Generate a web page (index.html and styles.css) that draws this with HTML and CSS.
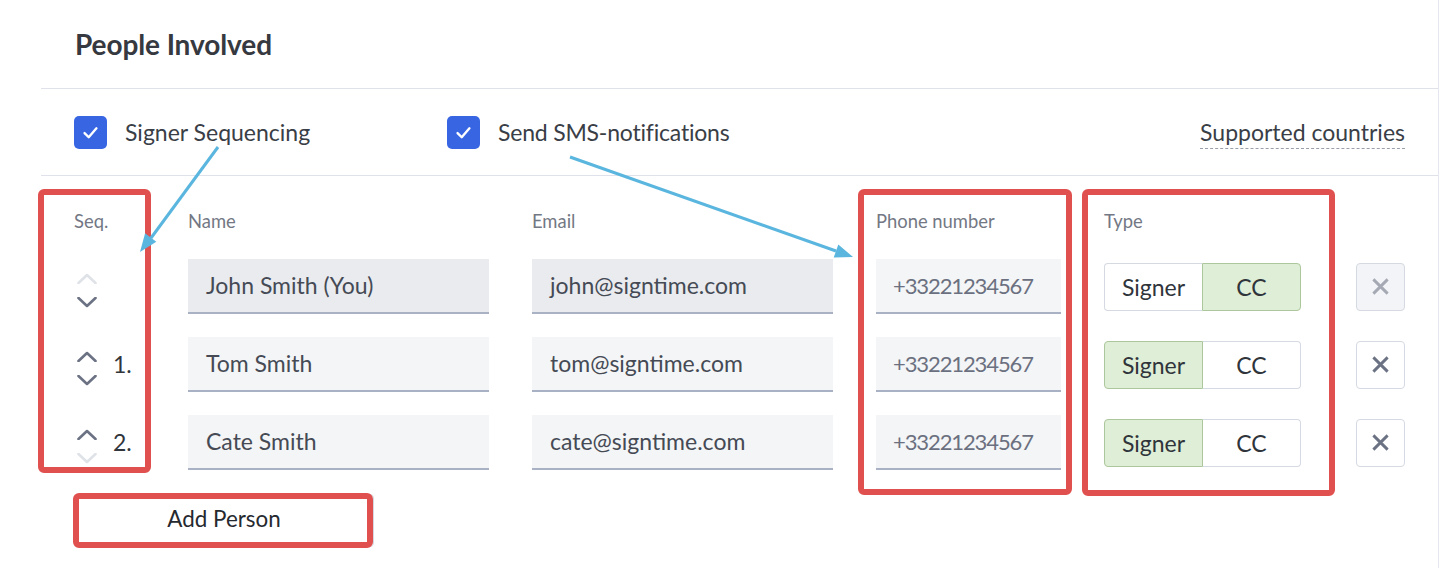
FILE: index.html
```html
<!DOCTYPE html>
<html>
<head>
<meta charset="utf-8">
<link rel="stylesheet" href="styles.css">
</head>
<body>
<div class="page">
  <div class="panel">
    <div class="title-bar"><h1 class="title">People Involved</h1></div>
    <div class="options">
      <label class="opt opt-seq">
        <span class="checkbox"><svg viewBox="0 0 16 16" width="19" height="19"><path d="M3 8.5 L6.5 12 L13 4.5" fill="none" stroke="#fff" stroke-width="2" stroke-linecap="round" stroke-linejoin="round"/></svg></span>
        <span class="opt-label">Signer Sequencing</span>
      </label>
      <label class="opt">
        <span class="checkbox"><svg viewBox="0 0 16 16" width="19" height="19"><path d="M3 8.5 L6.5 12 L13 4.5" fill="none" stroke="#fff" stroke-width="2" stroke-linecap="round" stroke-linejoin="round"/></svg></span>
        <span class="opt-label">Send SMS-notifications</span>
      </label>
      <a class="supported">Supported countries</a>
    </div>
    <div class="table">
      <div class="th">Seq.</div>
      <div class="th">Name</div>
      <div class="th">Email</div>
      <div class="th">Phone number</div>
      <div class="th">Type</div>
      <div class="th"></div>

      <div class="seq">
        <div class="chevrons">
          <svg class="chev off" viewBox="0 0 20 11" width="20" height="11"><path d="M1.5 10 L10 2 L18.5 10"/></svg>
          <svg class="chev" viewBox="0 0 20 11" width="20" height="11"><path d="M1.5 1 L10 9 L18.5 1"/></svg>
        </div>
        <span class="num"></span>
      </div>
      <div class="field disabled">John Smith (You)</div>
      <div class="field disabled">john@signtime.com</div>
      <div class="field phone">+33221234567</div>
      <div class="toggle"><span class="tg">Signer</span><span class="tg on">CC</span></div>
      <div class="del disabled"><svg viewBox="0 0 16 16" width="19" height="19"><path d="M2 2 L14 14 M14 2 L2 14"/></svg></div>

      <div class="seq">
        <div class="chevrons">
          <svg class="chev" viewBox="0 0 20 11" width="20" height="11"><path d="M1.5 10 L10 2 L18.5 10"/></svg>
          <svg class="chev" viewBox="0 0 20 11" width="20" height="11"><path d="M1.5 1 L10 9 L18.5 1"/></svg>
        </div>
        <span class="num">1.</span>
      </div>
      <div class="field">Tom Smith</div>
      <div class="field">tom@signtime.com</div>
      <div class="field phone">+33221234567</div>
      <div class="toggle"><span class="tg on">Signer</span><span class="tg">CC</span></div>
      <div class="del"><svg viewBox="0 0 16 16" width="19" height="19"><path d="M2 2 L14 14 M14 2 L2 14"/></svg></div>

      <div class="seq">
        <div class="chevrons">
          <svg class="chev" viewBox="0 0 20 11" width="20" height="11"><path d="M1.5 10 L10 2 L18.5 10"/></svg>
          <svg class="chev off" viewBox="0 0 20 11" width="20" height="11"><path d="M1.5 1 L10 9 L18.5 1"/></svg>
        </div>
        <span class="num">2.</span>
      </div>
      <div class="field">Cate Smith</div>
      <div class="field">cate@signtime.com</div>
      <div class="field phone">+33221234567</div>
      <div class="toggle"><span class="tg on">Signer</span><span class="tg">CC</span></div>
      <div class="del"><svg viewBox="0 0 16 16" width="19" height="19"><path d="M2 2 L14 14 M14 2 L2 14"/></svg></div>
    </div>
    <button class="add">Add Person</button>
  </div>

  <svg class="annot" width="1441" height="568" viewBox="0 0 1441 568">
    <g fill="none" stroke="#e0504f" stroke-width="6">
      <rect x="41" y="192" width="107" height="278" rx="3"/>
      <rect x="861" y="192" width="208" height="300" rx="3"/>
      <rect x="1085" y="192" width="247" height="301" rx="3"/>
      <rect x="76" y="496" width="294" height="49" rx="3"/>
    </g>
    <g stroke="#5ab6de" stroke-width="3" fill="#5ab6de">
      <line x1="218" y1="147" x2="151" y2="238"/>
      <polygon points="140,252 156.3,241.7 145.1,233.3" stroke="none"/>
      <line x1="570" y1="157" x2="836" y2="251"/>
      <polygon points="853,257 833.7,257.6 838.3,244.4" stroke="none"/>
    </g>
  </svg>
</div>
</body>
</html>
```

FILE: styles.css
```css
* { box-sizing: border-box; }
body {
  margin: 0;
  background: #fff;
  font-family: "Lato", "Liberation Sans", sans-serif;
  color: #363b44;
}
.page {
  position: relative;
  width: 1441px;
  height: 568px;
  overflow: hidden;
}
.panel {
  margin-left: 41px;
  width: 1398px;
  height: 568px;
  border-right: 1px solid #e4e7ee;
}
.title-bar {
  height: 89px;
  border-bottom: 1px solid #dfe2ea;
  padding: 27px 0 0 34px;
}
.title {
  margin: 0;
  font-size: 28px;
  line-height: 34px;
  font-weight: 700;
  color: #36393f;
  letter-spacing: -0.1px;
}
.options {
  height: 87px;
  border-bottom: 1px solid #dfe2ea;
  display: flex;
  align-items: center;
  padding: 0 33px 0 33px;
}
.opt {
  display: flex;
  align-items: center;
  gap: 18px;
}
.opt-seq { width: 373px; }
.checkbox {
  width: 33px;
  height: 33px;
  border-radius: 5px;
  background: #3866e3;
  display: flex;
  align-items: center;
  justify-content: center;
}
.opt-label {
  font-size: 23px;
  color: #3a3e46;
}
.opt:not(.opt-seq) .opt-label { letter-spacing: -0.2px; }
.supported {
  margin-left: auto;
  font-size: 23px;
  color: #3a3e46;
  text-decoration: underline dashed #9aa0aa;
  text-underline-offset: 7px;
  text-decoration-thickness: 1px;
}
.table {
  display: grid;
  grid-template-columns: 71px 301px 301px 185px 209px 49px;
  grid-auto-rows: 55px;
  grid-template-rows: 60px;
  column-gap: 43px;
  row-gap: 23px;
  padding: 0 33px;
}
.th {
  padding-top: 34px;
  font-size: 18.4px;
  line-height: 22px;
  color: #737884;
}
.seq {
  display: flex;
  padding-left: 3px;
  gap: 16px;
}
.chevrons {
  display: flex;
  flex-direction: column;
  padding-top: 14px;
  gap: 13px;
}
.chev path {
  fill: none;
  stroke: #6b7284;
  stroke-width: 2.6;
  stroke-linecap: round;
  stroke-linejoin: round;
}
.chev.off path { stroke: #dfe2e7; }
.num {
  font-size: 23px;
  line-height: 55px;
  color: #30343b;
}
.field {
  background: #f4f5f6;
  border-bottom: 2px solid #a9b1c4;
  padding-left: 18px;
  font-size: 23px;
  line-height: 53px;
  color: #454a55;
}
.field.disabled { background: #e9ebef; }
.field.phone {
  color: #6b7080;
  padding-left: 17px;
  font-size: 22px;
  letter-spacing: -1.1px;
}
.toggle {
  width: 197px;
  height: 48px;
  align-self: center;
  display: flex;
}
.tg {
  flex: 1;
  display: flex;
  align-items: center;
  justify-content: center;
  font-size: 23px;
  color: #30343b;
  background: #fff;
  border: 1px solid #d5d9e1;
}
.tg:first-child { border-radius: 4px 0 0 4px; border-right: none; }
.tg:last-child { border-radius: 0 4px 4px 0; border-left: none; }
.tg.on {
  background: #dfeed6;
  border: 1px solid #acc79c;
}
.del {
  width: 49px;
  height: 48px;
  align-self: center;
  border: 1px solid #d5d9e1;
  border-radius: 4px;
  background: #fff;
  display: flex;
  align-items: center;
  justify-content: center;
}
.del path { stroke: #6b7284; stroke-width: 2.4; fill: none; }
.del.disabled { background: #f3f4f7; }
.del.disabled path { stroke: #a5a9b4; }
.add {
  display: block;
  margin: 24px 0 0 33px;
  padding: 0 0 5px;
  width: 300px;
  height: 53px;
  background: #fff;
  border: 1px solid #d5d9e1;
  border-radius: 4px;
  font-family: "Lato", "Liberation Sans", sans-serif;
  font-size: 22.4px;
  color: #26292f;
}
.annot {
  position: absolute;
  top: 0;
  left: 0;
  pointer-events: none;
}
```
